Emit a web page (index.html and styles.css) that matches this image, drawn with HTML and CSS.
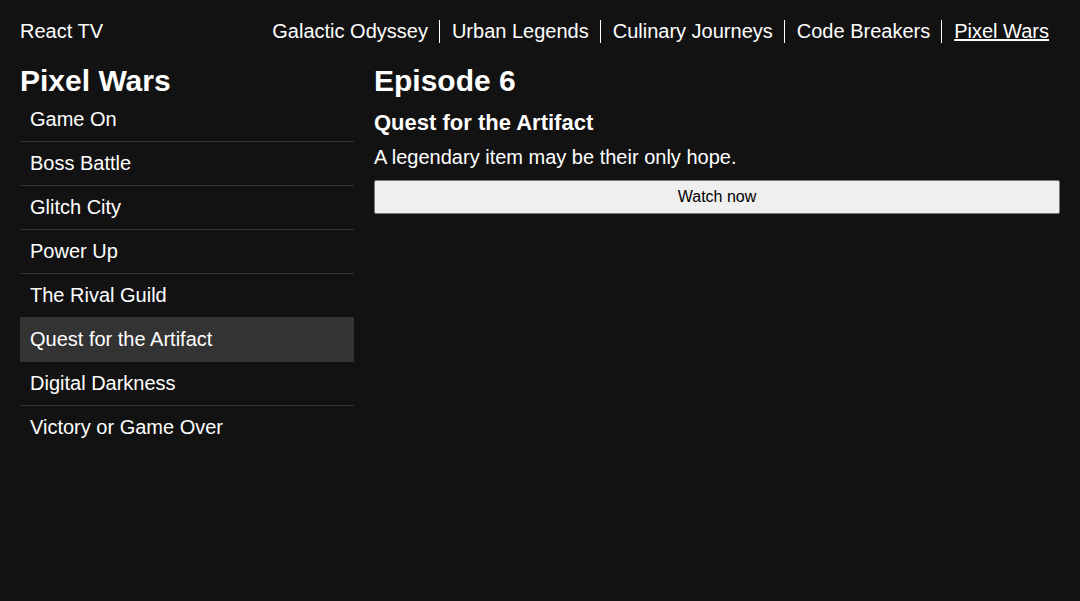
FILE: index.html
```html
<!DOCTYPE html>
<html>
<head>
<meta charset="utf-8">
<link rel="stylesheet" href="styles.css">
</head>
<body>
<header class="top">
  <div class="brand">React TV</div>
  <nav class="shows">
    <a class="show" href="#">Galactic Odyssey</a>
    <a class="show" href="#">Urban Legends</a>
    <a class="show" href="#">Culinary Journeys</a>
    <a class="show" href="#">Code Breakers</a>
    <a class="show current" href="#">Pixel Wars</a>
  </nav>
</header>
<main class="main">
  <aside class="side">
    <h1 class="title">Pixel Wars</h1>
    <ul class="episodes">
      <li class="ep">Game On</li>
      <li class="ep">Boss Battle</li>
      <li class="ep">Glitch City</li>
      <li class="ep">Power Up</li>
      <li class="ep">The Rival Guild</li>
      <li class="ep active">Quest for the Artifact</li>
      <li class="ep">Digital Darkness</li>
      <li class="ep">Victory or Game Over</li>
    </ul>
  </aside>
  <section class="detail">
    <h2 class="epnum">Episode 6</h2>
    <h3 class="eptitle">Quest for the Artifact</h3>
    <p class="desc">A legendary item may be their only hope.</p>
    <button class="watch">Watch now</button>
  </section>
</main>
</body>
</html>
```
FILE: styles.css
```css
html, body {
  margin: 0;
  background: #121212;
}
body {
  padding: 20px;
  color: #fff;
  font-family: "Liberation Sans", Arial, sans-serif;
  font-size: 20px;
  line-height: 23px;
}
.top {
  display: flex;
  justify-content: space-between;
  align-items: center;
}
.shows {
  display: flex;
  padding-right: 11px;
}
.show {
  color: #fff;
  text-decoration: none;
  padding: 0 11px 0 12px;
  border-left: 1px solid #fff;
}
.show:first-child {
  border-left: none;
}
.show.current {
  text-decoration: underline;
  padding-right: 0;
}
.main {
  display: flex;
  gap: 20px;
  margin-top: 20px;
}
.side {
  width: 334px;
  flex: none;
}
.title {
  margin: 0;
  font-size: 30px;
  line-height: 35px;
  font-weight: bold;
}
.episodes {
  list-style: none;
  margin: 0;
  padding: 0;
}
.ep {
  padding: 10px 10px;
  height: 23px;
  border-bottom: 1px solid #333;
}
.ep:last-child {
  border-bottom: none;
}
.ep.active {
  background: #333;
}
.detail {
  flex: 1;
}
.epnum {
  margin: 0;
  font-size: 30px;
  line-height: 35px;
  font-weight: bold;
}
.eptitle {
  margin: 12px 0 0;
  font-size: 22px;
  line-height: 26px;
  font-weight: bold;
}
.desc {
  margin: 10px 0 0;
  font-size: 20px;
  line-height: 23px;
}
.watch {
  display: block;
  width: 100%;
  margin-top: 11px;
  height: 34px;
  background: #efefef;
  border: 1px solid #767676;
  border-radius: 2px;
  color: #000;
  font-family: "Liberation Sans", Arial, sans-serif;
  font-size: 16px;
}
```
